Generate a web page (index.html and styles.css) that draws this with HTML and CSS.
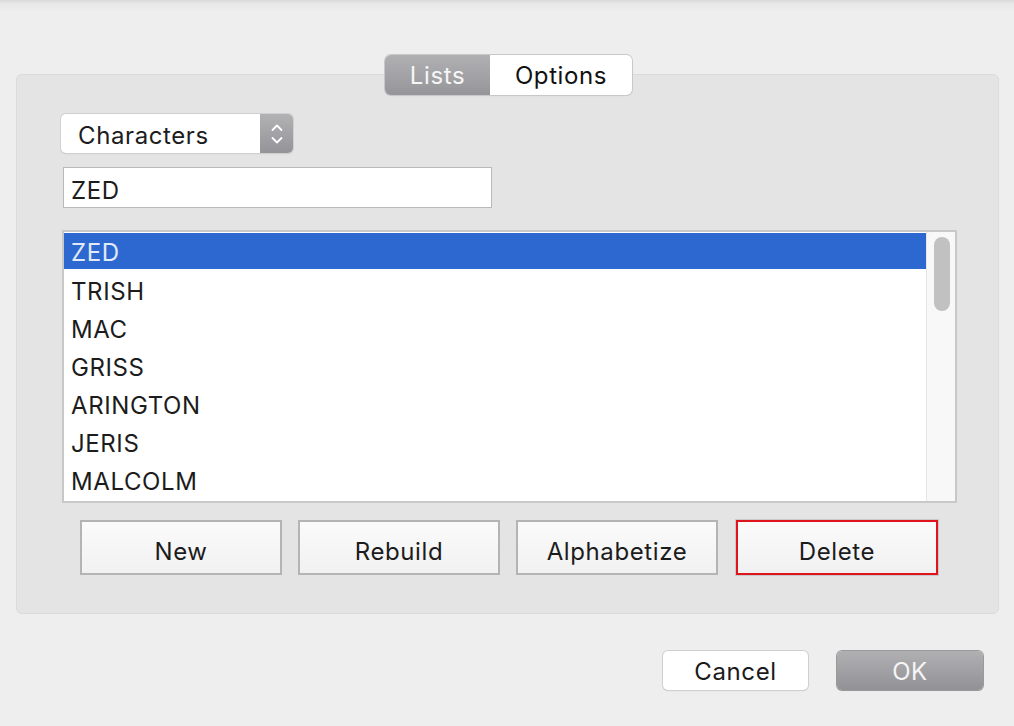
FILE: index.html
```html
<!DOCTYPE html>
<html>
<head>
<meta charset="utf-8">
<link rel="stylesheet" href="styles.css">
</head>
<body>
<div class="window">
  <div class="tabs">
    <div class="seg seg-on">Lists</div>
    <div class="seg seg-off">Options</div>
  </div>
  <div class="panel">
    <div class="popup">
      <span class="popup-label">Characters</span>
      <span class="popup-arrows">
        <svg width="14" height="24" viewBox="0 0 14 24"><path d="M2.5 8 L7 3.5 L11.5 8" fill="none" stroke="#fff" stroke-width="1.8" stroke-linecap="round" stroke-linejoin="round"/><path d="M2.5 16 L7 20.5 L11.5 16" fill="none" stroke="#fff" stroke-width="1.8" stroke-linecap="round" stroke-linejoin="round"/></svg>
      </span>
    </div>
    <div class="field">ZED</div>
    <div class="list">
      <div class="rows">
        <div class="row sel">ZED</div>
        <div class="row">TRISH</div>
        <div class="row">MAC</div>
        <div class="row">GRISS</div>
        <div class="row">ARINGTON</div>
        <div class="row">JERIS</div>
        <div class="row">MALCOLM</div>
      </div>
      <div class="scroll"><div class="thumb"></div></div>
    </div>
    <div class="actions">
      <div class="btn">New</div>
      <div class="btn">Rebuild</div>
      <div class="btn">Alphabetize</div>
      <div class="btn btn-focus">Delete</div>
    </div>
  </div>
  <div class="footer">
    <div class="pbtn cancel">Cancel</div>
    <div class="pbtn ok">OK</div>
  </div>
</div>
</body>
</html>
```

FILE: styles.css
```css
* { box-sizing: border-box; }
html, body { margin: 0; padding: 0; }
body {
  width: 1014px;
  height: 726px;
  overflow: hidden;
  background: #eeeeee;
  font-family: Inter, "Liberation Sans", sans-serif;
  font-size: 24px;
  letter-spacing: 0.6px;
  color: #222;
}
.window {
  height: 726px;
  padding-top: 55px;
  background: linear-gradient(#d9d9d9 0, #e8e8e8 4px, #eeeeee 12px, #eeeeee 100%);
}
.tabs {
  position: relative;
  z-index: 2;
  display: flex;
  width: 247px;
  height: 40px;
  margin-left: 385px;
  border-radius: 6px;
  box-shadow: 0 0 0 1px #c8c8c8, 0 1px 1px rgba(0,0,0,0.15);
  overflow: hidden;
}
.seg {
  display: flex;
  align-items: center;
  justify-content: center;
}
.seg-on {
  width: 105px;
  color: #f6f6f6;
  background: linear-gradient(#b0b0b3, #96969a);
}
.seg-off {
  flex: 1;
  color: #111;
  background: #fff;
}
.panel {
  margin: -21px 0 0 16px;
  width: 983px;
  height: 540px;
  background: #e4e4e4;
  border: 1px solid #dadada;
  border-radius: 6px;
  padding: 39px 0 0 44px;
}
.popup {
  display: flex;
  width: 232px;
  height: 39px;
  background: #fff;
  border-radius: 5px;
  box-shadow: 0 0 0 1px #d0d0d0, 0 1px 1px rgba(0,0,0,0.2);
  overflow: hidden;
}
.popup-label {
  flex: 1;
  display: flex;
  align-items: center;
  padding: 4px 0 0 17px;
  color: #1c1c1c;
}
.popup-arrows {
  width: 33px;
  display: flex;
  align-items: center;
  justify-content: center;
  background: linear-gradient(#b2b2b5, #949498);
}
.field {
  margin: 14px 0 0 2px;
  width: 429px;
  height: 41px;
  background: #fff;
  border: 1px solid #b9b9b9;
  padding: 8px 0 0 7px;
  color: #1c1c1c;
}
.list {
  margin: 22px 0 0 1px;
  width: 895px;
  height: 273px;
  background: #fff;
  border: 2px solid #c8c8c8;
  display: flex;
  overflow: hidden;
}
.rows {
  flex: 1;
  padding-top: 1px;
}
.row {
  height: 38px;
  line-height: 41px;
  padding-left: 7px;
  color: #1c1c1c;
}
.row.sel {
  height: 36px;
  line-height: 40px;
  margin-bottom: 2px;
  background: #2d68d0;
  color: #e2eaf8;
}
.scroll {
  width: 29px;
  background: #f8f8f8;
  border-left: 1px solid #e6e6e6;
  padding: 5px 0 0 7px;
}
.thumb {
  width: 16px;
  height: 74px;
  border-radius: 8px;
  background: #c1c1c1;
}
.actions {
  display: flex;
  gap: 16px;
  margin: 17px 0 0 19px;
}
.btn {
  width: 202px;
  height: 55px;
  display: flex;
  align-items: center;
  justify-content: center;
  background: linear-gradient(#fbfbfb, #f1f1f1);
  border: 2px solid #b4b4b4;
  color: #1c1c1c;
  padding-top: 7px;
}
.btn-focus {
  margin-left: 2px;
  border: 2px solid #e0141c;
  box-shadow: 0 0 0 1px #c9c9c9;
}
.footer {
  display: flex;
  gap: 29px;
  margin: 37px 0 0 663px;
}
.pbtn {
  width: 145px;
  height: 39px;
  border-radius: 5px;
  display: flex;
  align-items: center;
  justify-content: center;
  padding-top: 2px;
}
.cancel {
  background: #fff;
  box-shadow: 0 0 0 1px #cfcfcf, 0 1px 1px rgba(0,0,0,0.2);
  color: #1a1a1a;
}
.ok {
  width: 146px;
  background: linear-gradient(#b0b0b3, #929296);
  box-shadow: 0 0 0 1px #9a9a9d, 0 1px 1px rgba(0,0,0,0.15);
  color: #f5f5f5;
}
```
